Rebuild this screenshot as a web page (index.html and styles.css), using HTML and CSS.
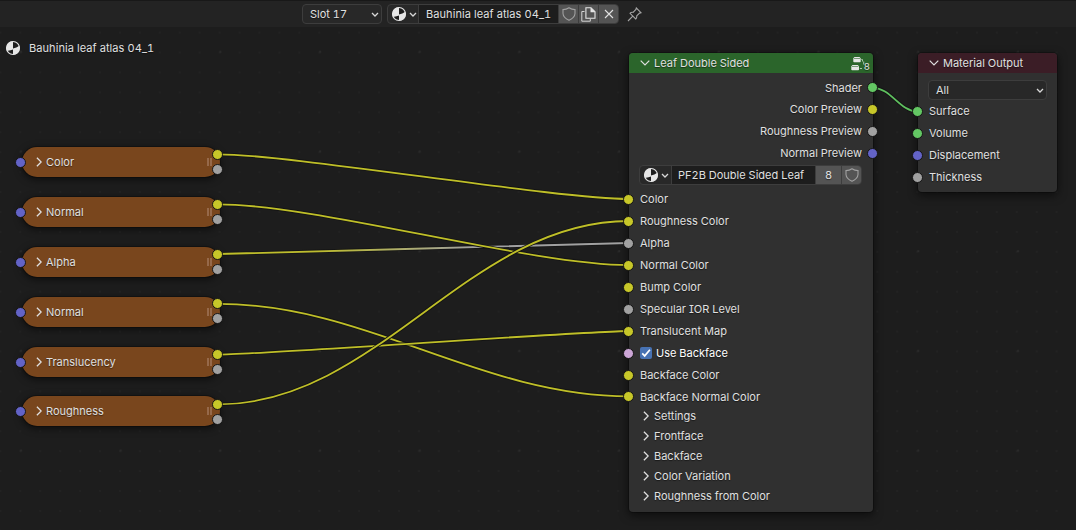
FILE: index.html
```html
<!DOCTYPE html>
<html lang="en">
<head>
<meta charset="utf-8">
<title>Shader Editor</title>
<link rel="stylesheet" href="styles.css">
</head>
<body>
<svg class="defs" width="0" height="0">
  <symbol id="ball" viewBox="0 0 16 16">
    <circle cx="8" cy="8" r="6.5" fill="#1d1d1d" stroke="#e6e6e6" stroke-width="1.1"/>
    <path d="M8 8V1.2A6.8 6.8 0 0 0 1.2 8C1.2 9 1.5 9.9 2 10.7Q5 11 8 9.6Z" fill="#e6e6e6"/>
    <path d="M8 8.6Q11.5 8 14.4 5.8A6.8 6.8 0 0 1 8 14.8Z" fill="#e6e6e6"/>
  </symbol>
  <symbol id="down" viewBox="0 0 8 5"><path d="M1 1L4 4L7 1" fill="none" stroke="#d8d8d8" stroke-width="1.3"/></symbol>
  <symbol id="open" viewBox="0 0 10 6"><path d="M.7 .7L5 5L9.3 .7" fill="none" stroke="#e0e0e0" stroke-width="1.2"/></symbol>
  <symbol id="right" viewBox="0 0 6 10"><path d="M.9 .7L5.2 5L.9 9.3" fill="none" stroke="#e0e0e0" stroke-width="1.3"/></symbol>
  <symbol id="shield" viewBox="0 0 14 14"><path d="M7 .8Q4.4 2.6 1 2.6V6.5Q1.2 10.6 7 13.3Q12.8 10.6 13 6.5V2.6Q9.6 2.6 7 .8Z" fill="none" stroke="#a0a0a0" stroke-width="1.1"/></symbol>
</svg>
<header class="bar">
  <div class="field slot"><span>Slot 17</span><svg class="down"><use href="#down"/></svg></div>
  <div class="field ident">
    <div class="pick"><svg class="ball"><use href="#ball"/></svg><svg class="down"><use href="#down"/></svg></div>
    <div class="name wide">Bauhinia leaf atlas 04_1</div>
    <div class="btn"><svg class="shield"><use href="#shield"/></svg></div>
    <div class="btn"><svg width="15" height="15" viewBox="0 0 15 15"><path d="M3.5 4.5H.8V14.2H9.3V12" fill="none" stroke="#d5d5d5"/><path d="M4.9 .8H10L14 4.8V11.3H4.9Z" fill="none" stroke="#e6e6e6" stroke-width="1.1"/><path d="M9.5 .8V5.2H14Z" fill="#e6e6e6"/></svg></div>
    <div class="btn"><svg width="10" height="10" viewBox="0 0 10 10"><path d="M1 1L9 9M9 1L1 9" stroke="#e0e0e0" stroke-width="1.1"/></svg></div>
  </div>
  <svg class="pin" width="15" height="15" viewBox="0 0 15 15"><path d="M9.3 1L14 5.7L12.6 6.1L9.7 8.9Q10 11 8.7 12L3 6.3Q4 5 6.1 5.3L8.9 2.4ZM5.8 9.2L1 14" fill="none" stroke="#a5a5a5" stroke-width="1.1"/></svg>
</header>
<main class="canvas">
  <svg class="back" width="1076" height="530" viewBox="0 0 1076 530">
    <defs>
      <pattern id="minor" x="10.3" y="2.7" width="19.93" height="19.93" patternUnits="userSpaceOnUse"><circle cx="10" cy="10" r=".7" fill="#292929"/></pattern>
      <pattern id="major" x="-29" y="1.8" width="99.7" height="99.7" patternUnits="userSpaceOnUse"><circle cx="50" cy="50" r="1.1" fill="#2b2b2b"/></pattern>
      <linearGradient id="fade" gradientUnits="userSpaceOnUse" x1="218" y1="0" x2="629" y2="0"><stop offset="0" stop-color="#bfbf28"/><stop offset=".25" stop-color="#bcbb30"/><stop offset=".62" stop-color="#a1a1a1"/></linearGradient>
    </defs>
    <rect y="27" width="1076" height="503" fill="url(#minor)"/>
    <rect y="27" width="1076" height="503" fill="url(#major)"/>
    <g class="wires">
      <path class="edge" d="M218 254C236 254 611 243 629 243"/>
      <path class="wire" d="M218 254C236 254 611 243 629 243" stroke="url(#fade)"/>
      <path class="edge" d="M218 154.3C291 154.3 556 199 629 199"/>
      <path class="wire" d="M218 154.3C291 154.3 556 199 629 199" stroke="#bfbf28"/>
      <path class="edge" d="M218 204.3C317 204.3 530 265 629 265"/>
      <path class="wire" d="M218 204.3C317 204.3 530 265 629 265" stroke="#bfbf28"/>
      <path class="edge" d="M218 303.8C367 303.8 480 396.3 629 396.3"/>
      <path class="wire" d="M218 303.8C367 303.8 480 396.3 629 396.3" stroke="#bfbf28"/>
      <path class="edge" d="M218 354.6C257 354.6 590 331 629 331"/>
      <path class="wire" d="M218 354.6C257 354.6 590 331 629 331" stroke="#bfbf28"/>
      <path class="edge" d="M218 404.4C378 404.4 469 221 629 221"/>
      <path class="wire" d="M218 404.4C378 404.4 469 221 629 221" stroke="#bfbf28"/>
      <path class="edge" d="M873 87.8C891 87.8 899.5 111.5 917.5 111.5"/>
      <path class="wire" d="M873 87.8C891 87.8 899.5 111.5 917.5 111.5" stroke="#5fc05f"/>
    </g>
  </svg>
  <div class="crumb"><svg class="ball"><use href="#ball"/></svg><span class="wide">Bauhinia leaf atlas 04_1</span></div>

  <div class="texture t1"><i class="dot vector"></i><svg class="right"><use href="#right"/></svg><span>Color</span><b class="grip"></b><i class="dot color"></i><i class="dot value"></i></div>
  <div class="texture t2"><i class="dot vector"></i><svg class="right"><use href="#right"/></svg><span>Normal</span><b class="grip"></b><i class="dot color"></i><i class="dot value"></i></div>
  <div class="texture t3"><i class="dot vector"></i><svg class="right"><use href="#right"/></svg><span>Alpha</span><b class="grip"></b><i class="dot color"></i><i class="dot value"></i></div>
  <div class="texture t4"><i class="dot vector"></i><svg class="right"><use href="#right"/></svg><span>Normal</span><b class="grip"></b><i class="dot color"></i><i class="dot value"></i></div>
  <div class="texture t5"><i class="dot vector"></i><svg class="right"><use href="#right"/></svg><span>Translucency</span><b class="grip"></b><i class="dot color"></i><i class="dot value"></i></div>
  <div class="texture t6"><i class="dot vector"></i><svg class="right"><use href="#right"/></svg><span>Roughness</span><b class="grip"></b><i class="dot color"></i><i class="dot value"></i></div>

  <section class="node leaf">
    <h2 class="head green"><svg class="open"><use href="#open"/></svg><span>Leaf Double Sided</span>
      <svg class="group" width="20" height="17" viewBox="0 0 20 17"><path d="M3.5 1H8.5L9.7 2.2V5.5Q9.7 6.3 8.9 6.3H3.1Q2.3 6.3 2.3 5.5V2.2ZM1.5 9H6.8L8 10.2V13.5Q8 14.3 7.2 14.3H1.1Q.3 14.3 .3 13.5V10.2Z" fill="#e6e6e6"/><path d="M3 2.5H9M1 10.5H7.3" stroke="#5c8a5c" stroke-width=".8"/><path d="M10.3 3.5H11.5V5.5M12.7 5.5V8.5M8.8 12.5H11" fill="none" stroke="#a9c4a9"/></svg><small>8</small></h2>
    <div class="outs">
      <div class="row out">Shader<i class="dot shader"></i></div>
      <div class="row out">Color Preview<i class="dot color"></i></div>
      <div class="row out">Roughness Preview<i class="dot value"></i></div>
      <div class="row out">Normal Preview<i class="dot vector"></i></div>
    </div>
    <div class="field datablock">
      <div class="pick"><svg class="ball"><use href="#ball"/></svg><svg class="down"><use href="#down"/></svg></div>
      <div class="name">PF2B Double Sided Leaf</div>
      <div class="btn users">8</div>
      <div class="btn"><svg class="shield"><use href="#shield"/></svg></div>
    </div>
    <div class="ins">
      <div class="row">Color<i class="dot color"></i></div>
      <div class="row">Roughness Color<i class="dot color"></i></div>
      <div class="row">Alpha<i class="dot value"></i></div>
      <div class="row">Normal Color<i class="dot color"></i></div>
      <div class="row">Bump Color<i class="dot color"></i></div>
      <div class="row">Specular IOR Level<i class="dot value"></i></div>
      <div class="row">Translucent Map<i class="dot color"></i></div>
      <div class="row bright"><svg class="check" width="12" height="12" viewBox="0 0 12 12"><rect width="12" height="12" rx="2" fill="#4772b3"/><path d="M2.2 6.3L4.7 8.9L9.9 2.8" fill="none" stroke="#fff" stroke-width="1.7"/></svg>Use Backface<i class="dot bool"></i></div>
      <div class="row">Backface Color<i class="dot color"></i></div>
      <div class="row">Backface Normal Color<i class="dot color"></i></div>
    </div>
    <div class="panels">
      <div class="panel"><svg class="right"><use href="#right"/></svg>Settings</div>
      <div class="panel"><svg class="right"><use href="#right"/></svg>Frontface</div>
      <div class="panel"><svg class="right"><use href="#right"/></svg>Backface</div>
      <div class="panel"><svg class="right"><use href="#right"/></svg>Color Variation</div>
      <div class="panel"><svg class="right"><use href="#right"/></svg>Roughness from Color</div>
    </div>
  </section>

  <section class="node output">
    <h2 class="head red"><svg class="open"><use href="#open"/></svg><span>Material Output</span></h2>
    <div class="field target"><span>All</span><svg class="down"><use href="#down"/></svg></div>
    <div class="row">Surface<i class="dot shader"></i></div>
    <div class="row">Volume<i class="dot shader"></i></div>
    <div class="row">Displacement<i class="dot vector"></i></div>
    <div class="row">Thickness<i class="dot value"></i></div>
  </section>
</main>
</body>
</html>
```
FILE: styles.css
```css
* { box-sizing: border-box; }
body {
  margin: 0;
  width: 1076px;
  height: 530px;
  overflow: hidden;
  background: #1d1d1d;
  color: #e0e0e0;
  font: 11px/14px Inter, "Liberation Sans", sans-serif;
  letter-spacing: 0;
  font-feature-settings: "cv08", "tnum";
  text-shadow: 0 1px 1px rgba(0, 0, 0, .5);
  white-space: nowrap;
}
svg { display: block; flex: none; }
.defs { position: absolute; }
.ball { width: 16px; height: 16px; }
.down { width: 8px; height: 5px; }
.open { width: 10px; height: 6px; }
.right { width: 6px; height: 10px; }
.shield { width: 14px; height: 14px; }
.wide { letter-spacing: .07px; }

.bar {
  display: flex;
  align-items: flex-start;
  height: 27px;
  padding: 4px 0 0 302px;
  background: #232323;
  border-top: 1px solid #181818;
}
.bar .field { height: 20px; margin-top: -1px; }
.field {
  display: flex;
  align-items: center;
  border: 1px solid #3d3d3d;
  border-radius: 4px;
  background: #282828;
  overflow: hidden;
}
.slot, .target { justify-content: space-between; }
.slot { width: 80px; padding: 0 2px 0 7px; }
.ident { width: 232px; margin-left: 5px; }
.pick {
  display: flex;
  align-items: center;
  gap: 2px;
  width: 30px;
  padding-left: 3px;
}
.name {
  flex: 1;
  align-self: stretch;
  display: flex;
  align-items: center;
  padding-left: 7px;
  background: #1d1d1d;
  border-left: 1px solid #3d3d3d;
}
.btn {
  display: flex;
  align-items: center;
  justify-content: center;
  align-self: stretch;
  width: 20px;
  background: #545454;
  border-left: 1px solid #3d3d3d;
}
.pin { margin: 2px 0 0 8px; }

.back { position: absolute; left: 0; top: 0; }
.wires { fill: none; }
.edge { stroke: #141414; stroke-width: 3.6; }
.wire { stroke-width: 1.8; }
.crumb {
  position: absolute;
  left: 5px;
  top: 40px;
  display: flex;
  align-items: center;
  gap: 8px;
}

.dot {
  position: absolute;
  width: 11px;
  height: 11px;
  border: 1px solid #151515;
  border-radius: 50%;
}
.color { background: #c7c729; }
.value { background: #a1a1a1; }
.vector { background: #6363c7; }
.shader { background: #63c763; }
.bool { background: #cca6d6; }

.texture {
  position: absolute;
  left: 22px;
  width: 198px;
  height: 30px;
  display: flex;
  align-items: center;
  gap: 4px;
  padding: 0 8px 0 14px;
  border-radius: 15px;
  background: #79461d;
  box-shadow: 0 0 0 1px rgba(0, 0, 0, .25), 0 2px 7px 1px rgba(0, 0, 0, .5);
}
.t1 { top: 147px; }
.t2 { top: 197px; }
.t3 { top: 247px; }
.t4 { top: 297px; }
.t5 { top: 347px; }
.t6 { top: 396px; }
.texture .dot { left: 190px; top: 2px; }
.texture .vector { left: -7px; top: 9.5px; }
.texture .value { top: 17px; }
.t4 .color { top: 1.4px; }
.t4 .value { top: 16.4px; }
.t6 .color { top: 3px; }
.t6 .value { top: 18px; }
.grip {
  width: 5px;
  height: 8px;
  margin-left: auto;
  border: 2px solid #96694a;
  border-width: 0 2px;
}

.node {
  position: absolute;
  top: 53px;
  border-radius: 4px;
  background: #303030;
  box-shadow: 0 0 0 1px rgba(0, 0, 0, .25), 0 3px 9px 1px rgba(0, 0, 0, .5);
}
.leaf { left: 629px; width: 244px; height: 459px; }
.output { left: 918px; width: 139px; height: 139px; }
.head {
  display: flex;
  align-items: center;
  gap: 4px;
  height: 20px;
  margin: 0;
  padding: 0 3px 0 11px;
  border-radius: 4px 4px 0 0;
  font: inherit;
}
.green { background: #2b652b; }
.red { background: #3b1d26; }
.group { margin: 3px -11px 0 auto; }
.head small { align-self: flex-end; font-size: 9.5px; line-height: 12px; }
.outs { padding-top: 4px; }
.row {
  position: relative;
  display: flex;
  align-items: center;
  height: 22px;
  padding: 0 11px;
}
.row .dot { left: -6px; top: 5.5px; }
.row.out { justify-content: flex-end; }
.row.out:first-child, .ins .row:last-child { height: 21px; }
.row.out:first-child .dot, .ins .row:last-child .dot { top: 5px; }
.row.out .dot { left: auto; right: -5px; }
.bright { color: #fff; gap: 4px; }
.datablock { width: 223px; height: 20px; margin: 1px 0 3px 10px; }
.datablock .pick { width: 31px; }
.datablock .name { padding-left: 6px; }
.datablock .users { width: 26px; }
.panels { margin-top: -1px; }
.panel {
  display: flex;
  align-items: center;
  gap: 5px;
  height: 20px;
  padding-left: 14px;
}
.target { width: 119px; height: 20px; margin: 7px 0 0 10px; padding: 0 2px 0 7px; }
```
